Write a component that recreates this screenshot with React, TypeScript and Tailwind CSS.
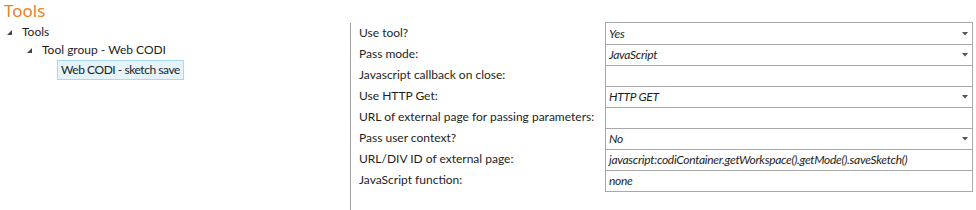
import React from "react";

const rows: { label: string; value: string; dropdown: boolean }[] = [
  { label: "Use tool?", value: "Yes", dropdown: true },
  { label: "Pass mode:", value: "JavaScript", dropdown: true },
  { label: "Javascript callback on close:", value: "", dropdown: false },
  { label: "Use HTTP Get:", value: "HTTP GET", dropdown: true },
  { label: "URL of external page for passing parameters:", value: "", dropdown: false },
  { label: "Pass user context?", value: "No", dropdown: true },
  { label: "URL/DIV ID of external page:", value: "javascript:codiContainer.getWorkspace().getMode().saveSketch()", dropdown: false },
  { label: "JavaScript function:", value: "none", dropdown: false },
];

function Tri() {
  return (
    <svg width="5" height="5" viewBox="0 0 5 5" className="shrink-0">
      <polygon points="5,0 5,5 0,5" fill="#444" />
    </svg>
  );
}

function Arrow() {
  return (
    <svg width="6" height="4" viewBox="0 0 6 4">
      <polygon points="0,0 6,0 3,3.5" fill="#555" />
    </svg>
  );
}

export default function App() {
  return (
    <div
      className="w-[976px] h-[210px] bg-white text-[12px] text-[#1e1e1e] overflow-hidden"
      style={{ fontFamily: 'Lato, "Noto Sans", sans-serif' }}
    >
      <div className="pl-[4px] text-[17px] leading-[22px] text-[#e8822a]" style={{ fontFamily: '"Noto Sans", sans-serif' }}>
        Tools
      </div>
      <div className="flex">
        <div className="w-[350px] shrink-0 pt-[1px]">
          <div className="flex items-center h-[18px] pl-[7px] gap-[10px]">
            <Tri />
            <span>Tools</span>
          </div>
          <div className="flex items-center h-[18px] pl-[27px] gap-[10px]">
            <Tri />
            <span>Tool group - Web CODI</span>
          </div>
          <div className="pl-[57px] pt-[1px]">
            <div className="inline-block h-[20px] leading-[18px] px-[3px] bg-[#e5f3fb] border border-[#a8d8f4] tracking-[-0.45px]">
              Web CODI - sketch save
            </div>
          </div>
        </div>
        <div className="border-l border-[#a0a0a0] h-[188px] mt-[1px] pl-[8px] flex">
          <div className="w-[246px]">
            {rows.map((r) => (
              <div key={r.label} className="h-[21px] leading-[20px] whitespace-nowrap">
                {r.label}
              </div>
            ))}
          </div>
          <div className="w-[368px] border border-[#a9a9a9] self-start -mt-[1px]">
            {rows.map((r, i) => (
              <div
                key={r.label}
                className={
                  "h-[21px] flex items-center justify-between pl-[3px] pr-[4px] italic whitespace-nowrap tracking-[-0.3px] " +
                  (i > 0 ? "border-t border-[#a9a9a9]" : "")
                }
              >
                <span>{r.value}</span>
                {r.dropdown ? <Arrow /> : null}
              </div>
            ))}
          </div>
        </div>
      </div>
    </div>
  );
}
